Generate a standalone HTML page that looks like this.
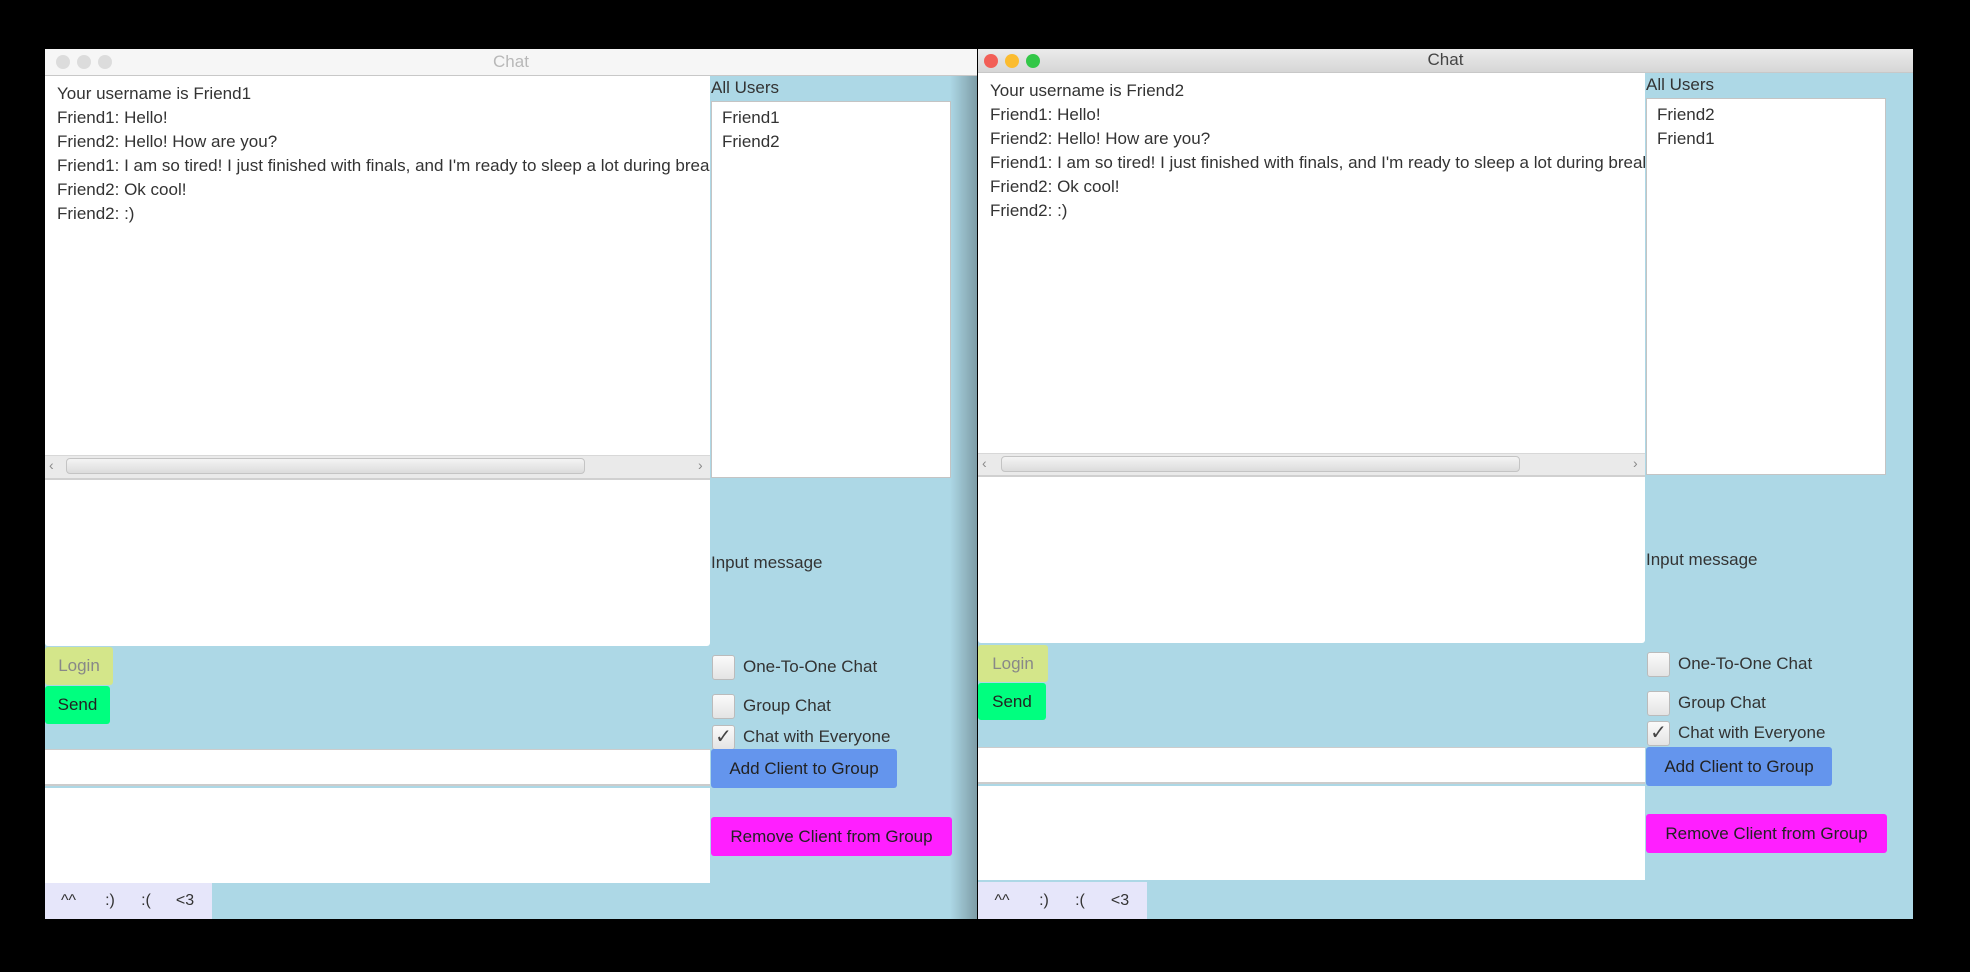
<!DOCTYPE html>
<html><head><meta charset="utf-8"><style>
*{margin:0;padding:0;box-sizing:border-box}
body{width:1970px;height:972px;background:#000;position:relative;overflow:hidden;font-family:"Liberation Sans",sans-serif;font-size:17px;color:#333}
.a{position:absolute}
.win{position:absolute;background:#add8e6;overflow:hidden}
.title{position:absolute;left:0;right:0;top:0;text-align:center;font-size:17px;border-bottom:1px solid #c8c8c8}
.dot{position:absolute;width:14px;height:14px;border-radius:50%;top:6px}
.white{position:absolute;background:#fff}
.lines div{height:24px;line-height:24px;white-space:nowrap}
.btn{position:absolute;border-radius:3px;font-size:17px;display:flex;align-items:center;justify-content:center;color:#222}
.cb{position:absolute;width:23px;height:25px;background:linear-gradient(#fafafa,#e4e4e4);border:1px solid #bbb;border-radius:3px}
.lbl{position:absolute;font-size:17px;color:#333;white-space:nowrap}
</style></head><body>

<!-- LEFT WINDOW -->
<div class="win" style="left:45px;top:49px;width:932px;height:870px">
  <div class="title" style="height:27px;line-height:25px;background:#f6f6f6;color:#b8b8b8">Chat</div>
  <div class="dot" style="left:11px;background:#dcdcdc"></div>
  <div class="dot" style="left:32px;background:#dcdcdc"></div>
  <div class="dot" style="left:53px;background:#dcdcdc"></div>
  <div class="white lines" style="left:0;top:27px;width:665px;height:379px;padding:6px 0 0 12px;overflow:hidden">
    <div>Your username is Friend1</div><div>Friend1: Hello!</div><div>Friend2: Hello! How are you?</div>
    <div>Friend1: I am so tired! I just finished with finals, and I'm ready to sleep a lot during break</div>
    <div>Friend2: Ok cool!</div><div>Friend2: :)</div>
  </div>
  <div class="a" style="left:0;top:406px;width:665px;height:25px;background:#eaeaea;border-top:1px solid #d8d8d8;border-bottom:2px solid #d0d0d0"></div>
  <div class="a" style="left:21px;top:409px;width:519px;height:16px;border-radius:4px;background:linear-gradient(#f4f4f4,#dcdcdc);border:1px solid #c4c4c4"></div>
  <div class="a" style="left:4px;top:408px;color:#888;font-size:14px">&lsaquo;</div>
  <div class="a" style="left:653px;top:408px;color:#888;font-size:14px">&rsaquo;</div>
  <div class="lbl" style="left:666px;top:29px">All Users</div>
  <div class="white lines" style="left:666px;top:52px;width:240px;height:377px;border:1px solid #c4c4c4;padding:4px 0 0 10px">
    <div>Friend1</div><div>Friend2</div>
  </div>
  <div class="white" style="left:0;top:431px;width:665px;height:166px;border-radius:0 0 3px 3px"></div>
  <div class="lbl" style="left:666px;top:504px">Input message</div>
  <div class="btn" style="left:0;top:598px;width:68px;height:38px;background:#d4e68a;color:#888">Login</div>
  <div class="btn" style="left:0;top:637px;width:65px;height:38px;background:#00ff7f">Send</div>
  <div class="cb" style="left:667px;top:606px"></div><div class="lbl" style="left:698px;top:608px">One-To-One Chat</div>
  <div class="cb" style="left:667px;top:645px"></div><div class="lbl" style="left:698px;top:647px">Group Chat</div>
  <div class="cb" style="left:667px;top:676px;font-size:20px;line-height:22px;text-align:center;color:#444">&#10003;</div><div class="lbl" style="left:698px;top:678px">Chat with Everyone</div>
  <div class="white" style="left:0;top:700px;width:665px;height:37px;border-top:1px solid #ccc;border-bottom:2px solid #ccc"></div>
  <div class="btn" style="left:666px;top:700px;width:186px;height:39px;background:#6495ed">Add Client to Group</div>
  <div class="white" style="left:0;top:739px;width:665px;height:95px"></div>
  <div class="btn" style="left:666px;top:768px;width:241px;height:39px;background:#ff1fff">Remove Client from Group</div>
  <div class="a" style="left:0;top:834px;width:167px;height:36px;background:#e6e6fa;display:flex;align-items:center;font-size:16px">
    <span style="width:47px;text-align:center">^^</span><span style="width:36px;text-align:center">:)</span><span style="width:36px;text-align:center">:(</span><span style="width:42px;text-align:center">&lt;3</span>
  </div>
  <div class="a" style="left:905px;top:27px;width:27px;height:843px;background:linear-gradient(90deg,rgba(0,0,0,0),rgba(0,0,0,0.28))"></div>
</div>

<!-- RIGHT WINDOW -->
<div class="win" style="left:978px;top:49px;width:935px;height:870px">
  <div class="title" style="height:24px;line-height:22px;background:linear-gradient(#ebebeb,#d6d6d6);color:#444">Chat</div>
  <div class="dot" style="left:6px;top:5px;background:#f25f57"></div>
  <div class="dot" style="left:27px;top:5px;background:#fbbc2f"></div>
  <div class="dot" style="left:48px;top:5px;background:#33c748"></div>
  <div class="white lines" style="left:0;top:24px;width:667px;height:380px;padding:6px 0 0 12px;overflow:hidden">
    <div>Your username is Friend2</div><div>Friend1: Hello!</div><div>Friend2: Hello! How are you?</div>
    <div>Friend1: I am so tired! I just finished with finals, and I'm ready to sleep a lot during break</div>
    <div>Friend2: Ok cool!</div><div>Friend2: :)</div>
  </div>
  <div class="a" style="left:0;top:404px;width:667px;height:24px;background:#eaeaea;border-top:1px solid #d8d8d8;border-bottom:2px solid #d0d0d0"></div>
  <div class="a" style="left:23px;top:407px;width:519px;height:16px;border-radius:4px;background:linear-gradient(#f4f4f4,#dcdcdc);border:1px solid #c4c4c4"></div>
  <div class="a" style="left:4px;top:406px;color:#888;font-size:14px">&lsaquo;</div>
  <div class="a" style="left:655px;top:406px;color:#888;font-size:14px">&rsaquo;</div>
  <div class="lbl" style="left:668px;top:26px">All Users</div>
  <div class="white lines" style="left:668px;top:49px;width:240px;height:377px;border:1px solid #c4c4c4;padding:4px 0 0 10px">
    <div>Friend2</div><div>Friend1</div>
  </div>
  <div class="white" style="left:0;top:428px;width:667px;height:166px;border-radius:0 0 3px 3px"></div>
  <div class="lbl" style="left:668px;top:501px">Input message</div>
  <div class="btn" style="left:0;top:596px;width:70px;height:37px;background:#d4e68a;color:#888">Login</div>
  <div class="btn" style="left:0;top:634px;width:68px;height:37px;background:#00ff7f">Send</div>
  <div class="cb" style="left:669px;top:603px"></div><div class="lbl" style="left:700px;top:605px">One-To-One Chat</div>
  <div class="cb" style="left:669px;top:642px"></div><div class="lbl" style="left:700px;top:644px">Group Chat</div>
  <div class="cb" style="left:669px;top:672px;font-size:20px;line-height:22px;text-align:center;color:#444">&#10003;</div><div class="lbl" style="left:700px;top:674px">Chat with Everyone</div>
  <div class="white" style="left:0;top:698px;width:667px;height:37px;border-top:1px solid #ccc;border-bottom:2px solid #ccc"></div>
  <div class="btn" style="left:668px;top:698px;width:186px;height:39px;background:#6495ed">Add Client to Group</div>
  <div class="white" style="left:0;top:737px;width:667px;height:94px"></div>
  <div class="btn" style="left:668px;top:765px;width:241px;height:39px;background:#ff1fff">Remove Client from Group</div>
  <div class="a" style="left:0;top:833px;width:169px;height:37px;background:#e6e6fa;display:flex;align-items:center;font-size:16px">
    <span style="width:48px;text-align:center">^^</span><span style="width:36px;text-align:center">:)</span><span style="width:36px;text-align:center">:(</span><span style="width:44px;text-align:center">&lt;3</span>
  </div>
</div>
</body></html>
